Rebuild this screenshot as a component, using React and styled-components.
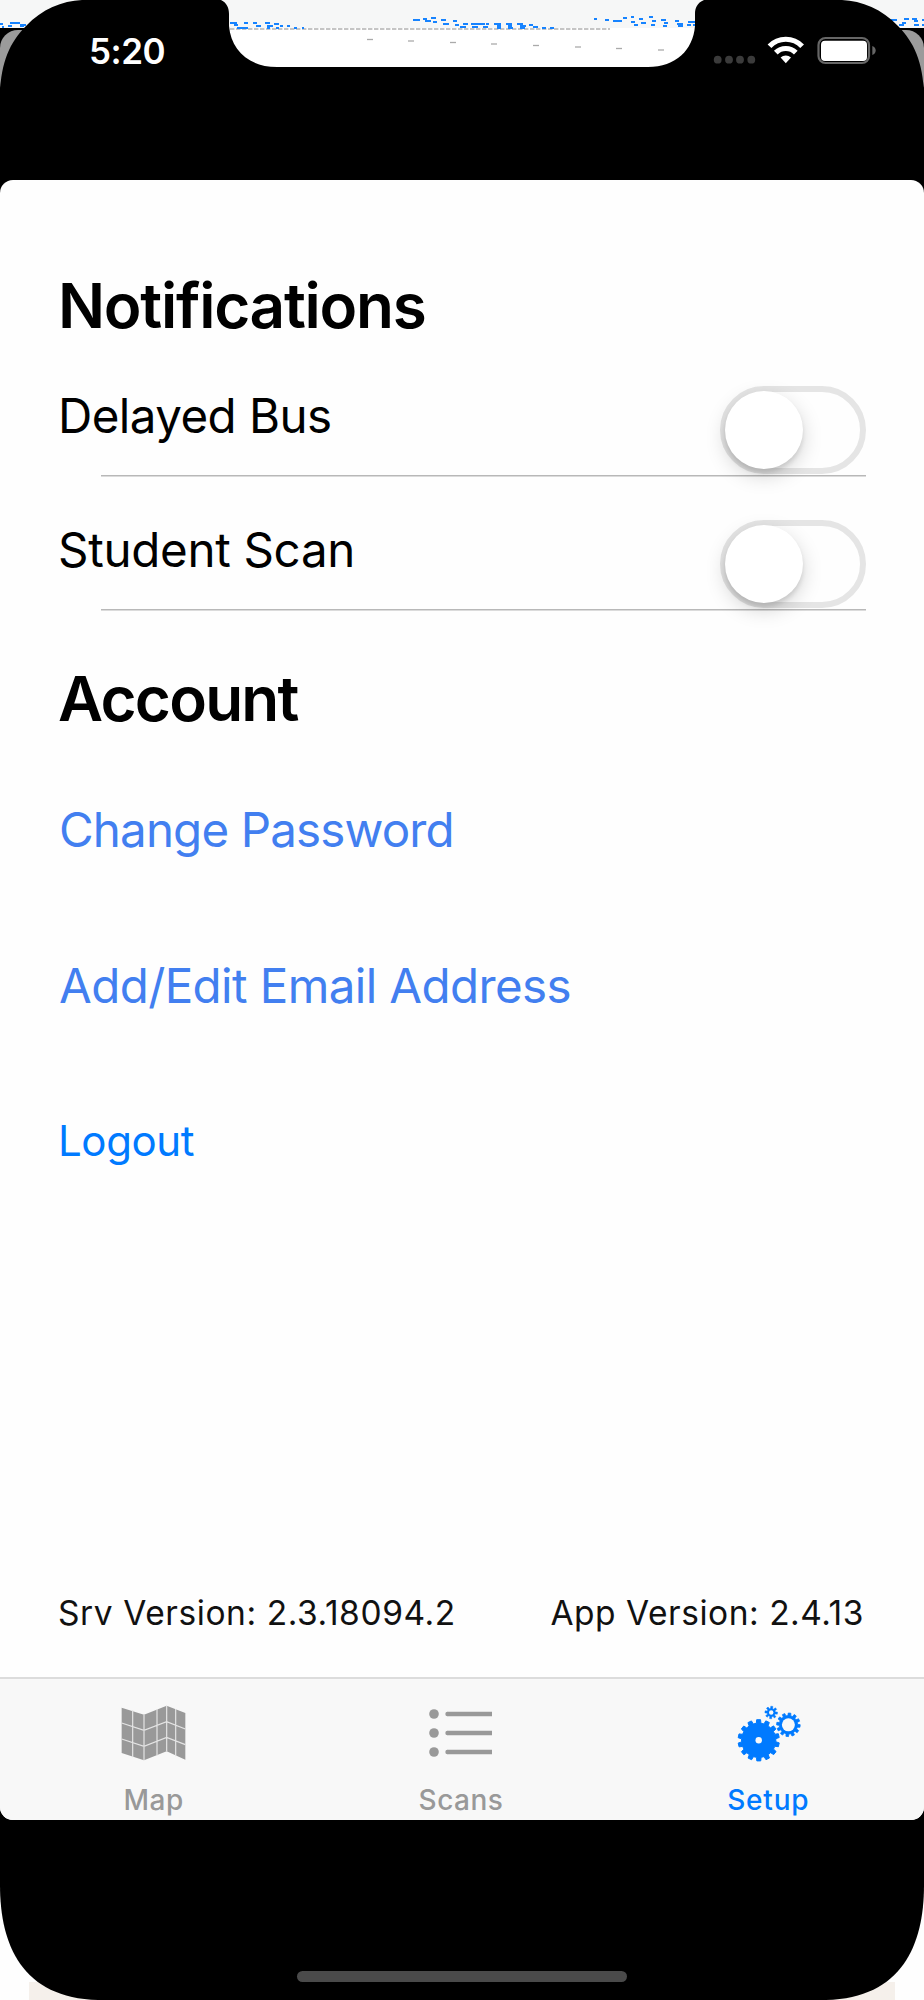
import React, { useState } from "react";
import styled, { createGlobalStyle } from "styled-components";

const GlobalStyle = createGlobalStyle`
  * { box-sizing: border-box; }
  body { margin: 0; background: #fff; font-family: Inter, "Liberation Sans", sans-serif; }
`;

const Phone = styled.div`
  position: relative;
  width: 924px;
  height: 2000px;
  overflow: hidden;
  display: flex;
  flex-direction: column;
  background: #000;
`;

const StatusBar = styled.header`
  position: relative;
  height: 180px;
  flex: none;
  padding: 29px 48px 0 89px;
  display: flex;
  justify-content: space-between;
  align-items: flex-start;
`;

const NotchArt = styled.svg`
  position: absolute;
  left: 0;
  top: 0;
`;

const Clock = styled.time`
  position: relative;
  color: #fff;
  font-size: 35px;
  line-height: 44px;
  font-weight: 600;
  letter-spacing: ${(p) => p.$tracking}px;
`;

const StatusIcons = styled.svg`
  position: relative;
`;

const Screen = styled.main`
  height: 1640px;
  flex: none;
  display: flex;
  flex-direction: column;
  background: #fefefe;
  border-radius: 13px;
  overflow: hidden;
`;

const Content = styled.div`
  flex: 1;
  display: flex;
  flex-direction: column;
  padding: 88px 58px 0 58px;
`;

const Heading = styled.h2`
  margin: 0;
  font-size: 62px;
  line-height: 76px;
  font-weight: 600;
  color: #000;
  white-space: nowrap;
  letter-spacing: ${(p) => p.$tracking}px;
`;

const SettingList = styled.div`
  display: flex;
  flex-direction: column;
  padding: 32px 0 50px;
`;

const SettingRow = styled.div`
  height: 134px;
  display: flex;
  justify-content: space-between;
  align-items: flex-start;
  padding: 10px 0 0;
  background: linear-gradient(#b8b8b8, #b8b8b8) 43px 99px / 765px 1.5px no-repeat;
  &:last-child { height: 101px; }
`;

const SettingLabel = styled.span`
  font-size: 47.5px;
  line-height: 60px;
  color: #000;
  white-space: nowrap;
  letter-spacing: ${(p) => p.$tracking}px;
`;

const Toggle = styled.button`
  width: 146px;
  height: 88px;
  flex: none;
  padding: 0;
  border: 6px solid #e5e5e5;
  border-radius: 44px;
  background: transparent;
  display: flex;
  align-items: center;
  justify-content: ${(p) => (p.$on ? "flex-end" : "flex-start")};
`;

const Knob = styled.span`
  width: 78px;
  height: 78px;
  flex: none;
  margin: 0 -1px;
  border-radius: 50%;
  background: #fff;
  box-shadow: 0 7px 20px rgba(0, 0, 0, 0.17), 0 4px 4px rgba(0, 0, 0, 0.1);
`;

const Actions = styled.nav`
  display: flex;
  flex-direction: column;
  align-items: flex-start;
  padding: 64px 0 0 1px;
  gap: 98px;
`;

const ActionLink = styled.a`
  font-size: ${(p) => p.$size}px;
  line-height: 58px;
  color: ${(p) => p.$color};
  white-space: nowrap;
  letter-spacing: ${(p) => p.$tracking}px;
  &:last-child { margin: -1px 0 0 -1px; }
`;

const Versions = styled.footer`
  display: flex;
  justify-content: space-between;
  padding: 0 60px 43px 58px;
`;

const Version = styled.span`
  font-size: 33.5px;
  line-height: 42px;
  color: #111;
  white-space: nowrap;
  letter-spacing: ${(p) => p.$tracking}px;
`;

const TabBar = styled.nav`
  height: 143px;
  flex: none;
  display: grid;
  grid-template-columns: repeat(3, 1fr);
  padding-right: 2px;
  border-top: 2px solid #dcdcdc;
  background: #f8f8f8;
`;

const Tab = styled.a`
  display: flex;
  flex-direction: column;
  align-items: center;
  padding-top: 26px;
  gap: 22px;
  color: ${(p) => (p.$active ? "#007aff" : "#999")};
`;

const TabLabel = styled.span`
  font-size: 28px;
  line-height: 34px;
  font-weight: 500;
  letter-spacing: ${(p) => p.$tracking}px;
`;

const HomeArea = styled.div`
  position: relative;
  flex: 1;
  display: flex;
  justify-content: center;
  align-items: flex-end;
  padding-bottom: 18px;
`;

const CornerArt = styled.svg`
  position: absolute;
  left: 0;
  bottom: 0;
`;

const HomeIndicator = styled.div`
  position: relative;
  width: 330px;
  height: 11px;
  border-radius: 6px;
  background: #4a4a4a;
`;

const SPECKS = [
  "M0 24h3m7 -1h10m-12 3h4m8 0h4M2 27h2m16 -2h6",
  "M230 23h7m-3 2h4m-1 3h7m0 -5h4m-4 5h4m5 -5h4m-1 3h5m4 -3h5m-3 3h6m-6 2h3m4 -4h5m1 2h3m-7 2h3m8 -2h3m4 2h3m5 0h2",
  "M413 20h7m3 -1h4m-2 2h6m0 -3h5m-3 4h4m4 -2h5m-3 4h6m4 -3h4m-2 4h4",
  "M460 27h6m-3 -3h5m3 0h14m-13 3h6m5 0h5m-2 -3h3m5 0h7m-4 2h4m-4 2h4m5 -4h6m-4 2h4m-4 2h5m4 -4h6m-3 2h6m-6 2h5m4 -3h4m0 2h5m4 1h4m4 0h4",
  "M594 19h3m8 1h4m4 1h9m1 -3h4m4 -1h3m-3 5h4m-1 3h4m1 -6h4m-2 4h5m3 -6h4m-1 4h4m-5 4h4m6 -5h5m-2 3h4m-5 3h4m8 -5h4m-2 3h6m-5 2h5m4 -1h4m-3 -3h9m-4 3h4m-2 2h6",
  "M891 20h6m7 -1h5m-7 4h4m6 -4h5m-3 2h4m-4 4h5m3 -5h4m-4 5h4m-27 0h5",
];

const TICKS = [
  [367, 39.5], [408, 41], [450, 42.5], [491, 44], [533, 45.5], [575, 47], [616, 48.5], [658, 50],
];

function Notch() {
  return (
    <NotchArt width="924" height="180" viewBox="0 0 924 180">
      <rect width="924" height="29" fill="#f6f7f7" />
      <rect y="28" width="924" height="60" fill="#000" />
      <rect x="0" y="30" width="924" height="70" rx="18" fill="#9b9b9b" />
      <rect x="226" y="28" width="474" height="42" fill="#fff" />
      <path d="M230 29H610" stroke="#b3b3b3" strokeWidth="1.4" strokeDasharray="4.4 1.6" />
      {SPECKS.map((d) => (
        <path key={d} d={d} stroke="#1683ff" strokeWidth="2.1" fill="none" />
      ))}
      {TICKS.map(([x, y]) => (
        <path key={x} d={`M${x} ${y}h6`} stroke="#aaa" strokeWidth="1.3" />
      ))}
      <path
        fill="#000"
        d="M0 180V94C1 62 10 42 26 26C42 9 62 1 82 0H221C227 3 229 8 229 14V26C231 50 249 67 277 67H648C676 67 693 50 695 26V14C695 8 697 3 704 0H842C862 1 882 9 898 26C914 42 923 62 924 94V180Z"
      />
    </NotchArt>
  );
}

function StatusGlyphs() {
  return (
    <StatusIcons width="164" height="36" viewBox="712 29 164 36">
      {[717.7, 729, 740, 751.3].map((x) => (
        <circle key={x} cx={x} cy="59.7" r="3.9" fill="#3b3b3b" />
      ))}
      <g fill="none" stroke="#fff" strokeWidth="5.2">
        <path d="M769.5 46.2a22.6 22.6 0 0 1 32.6 0" />
        <path d="M775.8 52.6a14.2 14.2 0 0 1 20 0" />
      </g>
      <path d="M780.6 57.6a7.8 7.8 0 0 1 10.4 0L785.8 63.2Z" fill="#fff" />
      <rect x="818.5" y="38" width="50.5" height="25" rx="7" fill="none" stroke="#666" strokeWidth="2.2" />
      <rect x="821" y="40.7" width="46" height="20.2" rx="4" fill="#fff" />
      <path d="M872.3 46c4.5 1.5 4.5 7.5 0 9Z" fill="#666" />
    </StatusIcons>
  );
}

function MapIcon() {
  return (
    <svg width="65" height="56" viewBox="91 106 195 168">
      <path
        fill="#999"
        d="M93 114L160 135L228 108L284 130V270L228 245L160 272L93 250Z"
      />
      <path
        fill="none"
        stroke="#e4e4e4"
        strokeWidth="3.6"
        d="M93 160L160 182L228 156L284 178M93 208L160 230L228 203L284 225M126 122V263M160 135V272M199 118V258M228 108V245M255 118V260"
      />
    </svg>
  );
}

function ListIcon() {
  return (
    <svg width="65" height="56" viewBox="0 0 65 56">
      {[9, 28, 47].map((y) => (
        <g key={y}>
          <circle cx="6" cy={y} r="4.8" fill="#999" />
          <path d={`M19.5 ${y}H64`} stroke="#999" strokeWidth="4.4" />
          <circle cx="19.5" cy={y} r="2.2" fill="#999" />
        </g>
      ))}
    </svg>
  );
}

// Outline of a cog: each tooth spans half of its angular step.
function cog(cx, cy, outer, root, teeth, turn = 0) {
  const step = (Math.PI * 2) / teeth;
  const points = [];
  for (let i = 0; i < teeth; i++) {
    const a = i * step + turn;
    [[root, -0.3], [outer, -0.21], [outer, 0.21], [root, 0.3]].forEach(([r, k]) => {
      points.push(`${(cx + r * Math.cos(a + k * step)).toFixed(2)} ${(cy + r * Math.sin(a + k * step)).toFixed(2)}`);
    });
  }
  return `M${points.join("L")}Z`;
}

function GearsIcon() {
  return (
    <svg width="65" height="56" viewBox="-0.7 0 65 56" overflow="visible" fill="#007aff" stroke="#007aff" strokeLinejoin="round">
      <path d={cog(22, 35.3, 20.7, 17.2, 14, 0.22)} strokeWidth="1" />
      <path d={cog(51.7, 19.8, 11.8, 9.2, 12, 0.1)} strokeWidth="0.8" />
      <path d={cog(34.5, 7.5, 6.3, 4.2, 8, 0.1)} strokeWidth="0.5" />
      <circle cx="22" cy="35.3" r="3.2" fill="#f8f8f8" stroke="none" />
      <circle cx="51.7" cy="19.8" r="6.5" fill="#f8f8f8" stroke="none" />
      <circle cx="34.5" cy="7.5" r="2.2" fill="#f8f8f8" stroke="none" />
    </svg>
  );
}

function Setting({ label, tracking }) {
  const [on, setOn] = useState(false);
  return (
    <SettingRow>
      <SettingLabel $tracking={tracking}>{label}</SettingLabel>
      <Toggle $on={on} aria-label={label} onClick={() => setOn(!on)}>
        <Knob />
      </Toggle>
    </SettingRow>
  );
}

export default function App() {
  return (
    <>
      <GlobalStyle />
      <Phone>
        <StatusBar>
          <Notch />
          <Clock $tracking={-0.5}>5:20</Clock>
          <StatusGlyphs />
        </StatusBar>
        <Screen>
          <Content>
            <Heading $tracking={-1.25}>Notifications</Heading>
            <SettingList>
              <Setting label="Delayed Bus" tracking={-0.55} />
              <Setting label="Student Scan" tracking={-0.3} />
            </SettingList>
            <Heading $tracking={-1.75}>Account</Heading>
            <Actions>
              <ActionLink $size={47.5} $color="#427ff0" $tracking={-0.85}>Change Password</ActionLink>
              <ActionLink $size={47.5} $color="#427ff0" $tracking={-0.6}>Add/Edit Email Address</ActionLink>
              <ActionLink $size={42} $color="#007aff" $tracking={-0.4}>Logout</ActionLink>
            </Actions>
          </Content>
          <Versions>
            <Version $tracking={0.58}>Srv Version: 2.3.18094.2</Version>
            <Version $tracking={0.53}>App Version: 2.4.13</Version>
          </Versions>
          <TabBar>
            <Tab>
              <MapIcon />
              <TabLabel $tracking={0.5}>Map</TabLabel>
            </Tab>
            <Tab>
              <ListIcon />
              <TabLabel $tracking={0.5}>Scans</TabLabel>
            </Tab>
            <Tab $active>
              <GearsIcon />
              <TabLabel $tracking={0.8}>Setup</TabLabel>
            </Tab>
          </TabBar>
        </Screen>
        <HomeArea>
          <CornerArt width="924" height="130" viewBox="0 0 924 130">
            <rect y="15" width="924" height="115" fill="#fefefe" />
            <rect x="29" y="112" width="866" height="18" fill="#f5f0eb" />
            <path fill="#000" d="M0 0V15C0 75 22 128 98 130H826C902 128 924 75 924 15V0Z" />
          </CornerArt>
          <HomeIndicator />
        </HomeArea>
      </Phone>
    </>
  );
}
